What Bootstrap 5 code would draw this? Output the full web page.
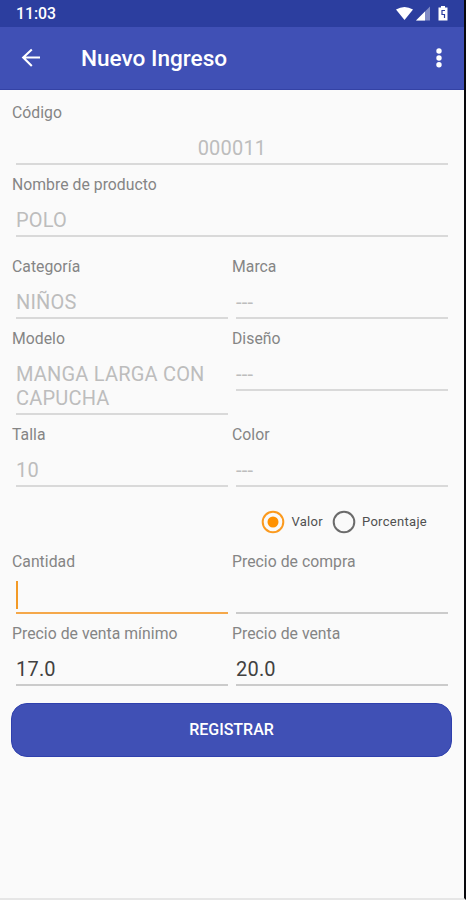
<!DOCTYPE html>
<html lang="es">
<head>
<meta charset="utf-8">
<meta name="viewport" content="width=device-width, initial-scale=1">
<title>Nuevo Ingreso</title>
<link href="https://cdn.jsdelivr.net/npm/bootstrap@5.3.0/dist/css/bootstrap.min.css" rel="stylesheet">
<style>
body{font-family:Roboto,"Liberation Sans",sans-serif;background:#fafafa;color:#414141}
.screen{height:900px;border-right:2px solid #08080c;border-bottom:2px solid #e6e6e6}
.status{height:27px;background:#2c3e9f;padding:1px 15px 0 16px;font-size:15.800px;font-weight:500;line-height:26px}
.appbar{height:63px;background:#4050b5;border-bottom:1px solid #3442a5;padding:0 17px 0 21px}
.app-title{font-size:22.600px;font-weight:500;line-height:28px;margin-left:40px;padding-top:2px;height:30px}
.form-area{padding:13px 12px 0}
.field{height:72px}
.field.spaced{height:82px}
.field.tall{height:96px}
.field-name{display:block;font-size:15.750px;letter-spacing:.03px;line-height:20px;color:#858585;white-space:nowrap}
.value{margin:0 4px;padding:13px 0 3px;border-bottom:2px solid #d9d9d9;font-size:20px;letter-spacing:.2px;line-height:24px;min-height:42px;color:#bdbdbd}
.value.active{color:#414141;border-color:#cbcbcb}
.value.focused{border-color:#f5a84a}
.caret{width:2px;height:28px;margin-top:-4px;margin-bottom:-1px;background:#f39a26}
.pair{display:grid;grid-template-columns:220px 220px}
.choices{height:55px;padding:13px 25px 0 0;font-size:13px;letter-spacing:.3px;color:#505050}
.choice-label{margin-left:6px}
.choice-next{margin-left:9px}
.btn-save{height:54px;border-radius:16px;background:#4050b5;border:1px solid #2f40ad;color:#fff;font-size:16px;font-weight:500;margin-top:7px;margin-left:-1px}
</style>
<script src="https://cdn.jsdelivr.net/npm/bootstrap@5.3.0/dist/js/bootstrap.bundle.min.js"></script>
</head>
<body>
<div class="screen overflow-hidden">
  <div class="status d-flex justify-content-between align-items-center text-white">
    <span>11:03</span>
    <svg width="54" height="18" viewBox="0 0 54 18" fill="#fff">
      <path d="M1 4.500Q9.500-.5 18 4.500L9.500 15z"/>
      <path d="M35 1.500v14H21z" opacity=".4"/><path d="M30 6.500v9H21z"/>
      <path d="M44 2.500h2V1h4v1.500h2.500v13H43.500v-13z"/>
      <path d="M50 5.500h-3v4h2.500v3.500" fill="none" stroke="#2c3e9f" stroke-width="1.200"/>
    </svg>
  </div>
  <header class="appbar d-flex align-items-center text-white">
    <svg width="20" height="20" viewBox="0 0 20 20" fill="none" stroke="#fff" stroke-width="2.100"><path d="M19 9.500H2M10.800 1.500L2.200 9.500l8.600 8.500"/></svg>
    <h1 class="app-title mb-0">Nuevo Ingreso</h1>
    <svg class="ms-auto" width="16" height="24" viewBox="0 0 16 24" fill="#fff"><circle cx="8" cy="5" r="2.700"/><circle cx="8" cy="12" r="2.700"/><circle cx="8" cy="18.800" r="2.700"/></svg>
  </header>
  <main class="form-area">
    <div class="field"><span class="field-name">Código</span><div class="value text-center">000011</div></div>
    <div class="field spaced"><span class="field-name">Nombre de producto</span><div class="value">POLO</div></div>
    <div class="pair">
      <div class="field"><span class="field-name">Categoría</span><div class="value">NIÑOS</div></div>
      <div class="field"><span class="field-name">Marca</span><div class="value">---</div></div>
      <div class="field tall"><span class="field-name">Modelo</span><div class="value">MANGA LARGA CON CAPUCHA</div></div>
      <div class="field tall"><span class="field-name">Diseño</span><div class="value">---</div></div>
      <div class="field"><span class="field-name">Talla</span><div class="value">10</div></div>
      <div class="field"><span class="field-name">Color</span><div class="value">---</div></div>
    </div>
    <div class="choices d-flex justify-content-end align-items-start">
      <div class="d-flex align-items-center">
        <svg width="24" height="24" viewBox="0 0 24 24"><circle cx="12" cy="12" r="10.300" fill="none" stroke="#fb9a1e" stroke-width="2"/><circle cx="12" cy="12" r="5.500" fill="#ff9100"/></svg>
        <span class="choice-label">Valor</span>
        <svg class="choice-next" width="24" height="24" viewBox="0 0 24 24"><circle cx="12" cy="12" r="10.300" fill="none" stroke="#6b6b6b" stroke-width="2"/></svg>
        <span class="choice-label">Porcentaje</span>
      </div>
    </div>
    <div class="pair">
      <div class="field"><span class="field-name">Cantidad</span><div class="value focused"><div class="caret"></div></div></div>
      <div class="field"><span class="field-name">Precio de compra</span><div class="value active"></div></div>
      <div class="field"><span class="field-name">Precio de venta mínimo</span><div class="value active">17.0</div></div>
      <div class="field"><span class="field-name">Precio de venta</span><div class="value active">20.0</div></div>
    </div>
    <div class="d-grid"><button type="button" class="btn-save">REGISTRAR</button></div>
  </main>
</div>
</body>
</html>
